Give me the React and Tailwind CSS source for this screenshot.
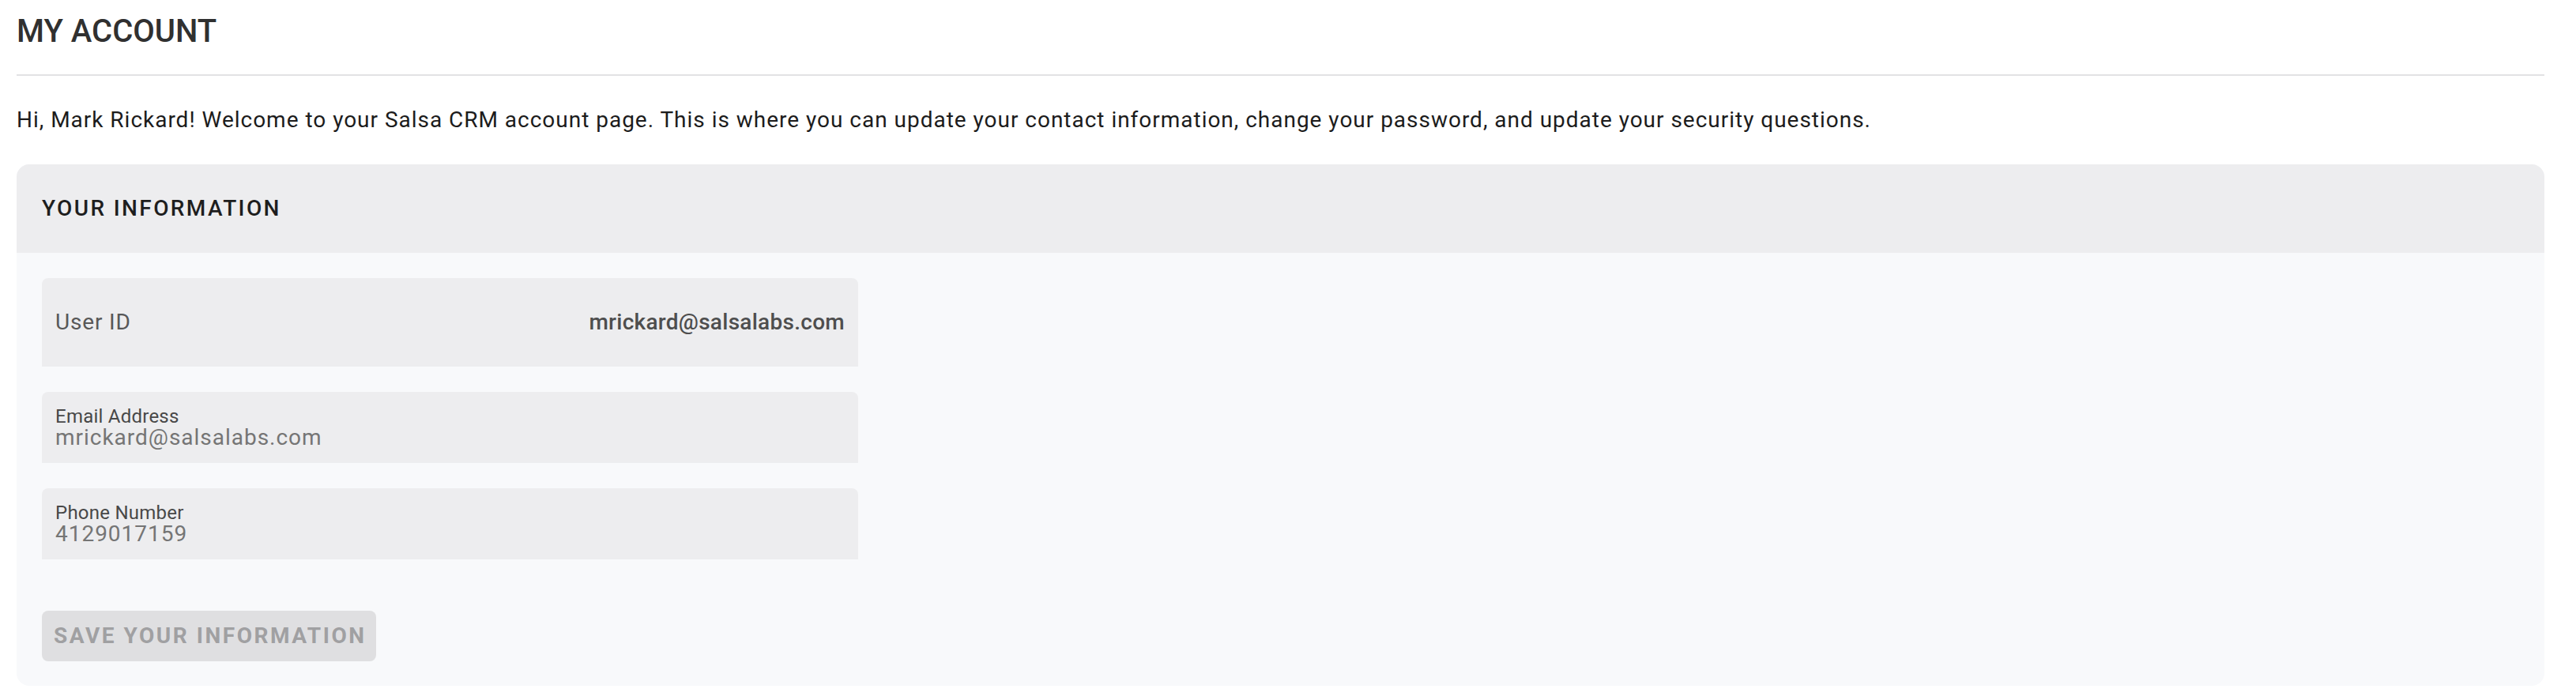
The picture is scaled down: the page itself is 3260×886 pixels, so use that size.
import React from "react";

const Field = ({ label, value }) => (
  <div className="w-[1033px] rounded-t-[8px] bg-[#ededef] px-[17px] pt-[19px] pb-[18px]">
    <div className="text-[24px] leading-[25px] tracking-[0.01em] text-[#484848]">{label}</div>
    <div className="text-[28px] leading-[28px] tracking-[0.035em] text-[#757575]">{value}</div>
  </div>
);

const App = () => {
  return (
    <div
      className="min-h-[886px] bg-white pl-[21px] pr-[40px] pt-[16px]"
      style={{ fontFamily: "Roboto, 'Liberation Sans', sans-serif" }}
    >
      {/* Page title */}
      <h1 className="text-[40px] leading-[48px] font-medium text-[#303030]">MY ACCOUNT</h1>
      <div className="mt-[30px] h-[2px] bg-[#e2e2e4]"></div>

      <p className="mt-[36px] text-[28px] leading-[40px] tracking-[0.035em] text-[#1c1c1c]">
        Hi, Mark Rickard! Welcome to your Salsa CRM account page. This is where you can update your contact
        information, change your password, and update your security questions.
      </p>

      {/* Your information panel */}
      <div className="mt-[36px] overflow-hidden rounded-[16px] bg-[#f8f9fb]">
        <div className="flex h-[112px] items-center bg-[#ededef] px-[32px]">
          <h2 className="text-[28px] font-medium tracking-[0.085em] text-[#1e1e1e]">YOUR INFORMATION</h2>
        </div>

        <div className="flex flex-col items-start gap-[32px] px-[32px] pt-[32px] pb-[31px]">
          <div className="flex h-[112px] w-[1033px] items-center justify-between rounded-t-[8px] bg-[#ededef] px-[17px]">
            <span className="text-[28px] tracking-[0.03em] text-[#585858]">User ID</span>
            <span className="text-[28px] font-medium tracking-[0.01em] text-[#4e4e4e]">mrickard@salsalabs.com</span>
          </div>

          <Field label="Email Address" value="mrickard@salsalabs.com" />
          <Field label="Phone Number" value="4129017159" />

          <button
            disabled
            className="mt-[33px] h-[64px] w-[423px] rounded-[8px] bg-[#dfdfe1] pl-[15px] text-left text-[28px] font-bold tracking-[0.09em] text-[#a0a0a2]"
          >
            SAVE YOUR INFORMATION
          </button>
        </div>
      </div>
    </div>
  );
};

export default App;
